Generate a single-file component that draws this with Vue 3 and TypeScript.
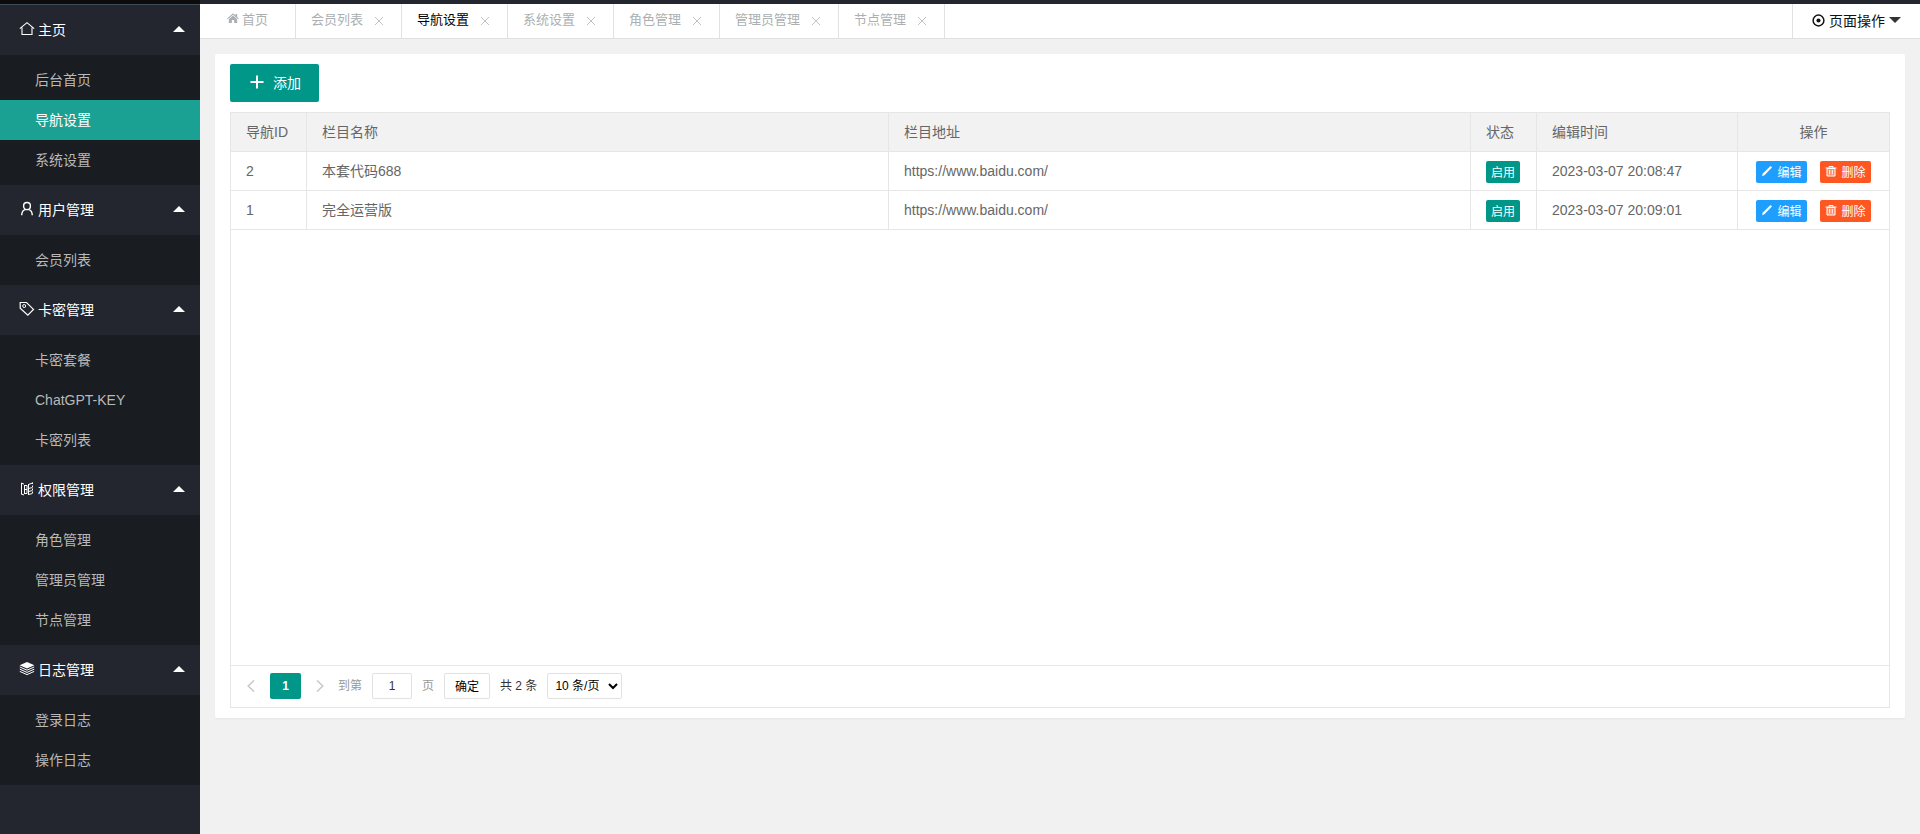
<script setup lang="ts">
import { ref } from 'vue'

interface MenuGroup {
  title: string
  icon: string
  children: string[]
}

interface NavRow {
  id: number
  name: string
  url: string
  time: string
}

const groups: MenuGroup[] = [
  { title: '主页', icon: 'home', children: ['后台首页', '导航设置', '系统设置'] },
  { title: '用户管理', icon: 'user', children: ['会员列表'] },
  { title: '卡密管理', icon: 'tag', children: ['卡密套餐', 'ChatGPT-KEY', '卡密列表'] },
  { title: '权限管理', icon: 'book', children: ['角色管理', '管理员管理', '节点管理'] },
  { title: '日志管理', icon: 'layers', children: ['登录日志', '操作日志'] },
]

const tabs = ref<string[]>(['会员列表', '导航设置', '系统设置', '角色管理', '管理员管理', '节点管理'])
const active = ref('导航设置')
const page = ref('1')

const rows: NavRow[] = [
  { id: 2, name: '本套代码688', url: 'https://www.baidu.com/', time: '2023-03-07 20:08:47' },
  { id: 1, name: '完全运营版', url: 'https://www.baidu.com/', time: '2023-03-07 20:09:01' },
]

function closeTab(name: string): void {
  tabs.value = tabs.value.filter((t) => t !== name)
}
</script>

<template>
  <div class="layout">
    <nav class="side">
      <section v-for="g in groups" :key="g.title" class="group">
        <button class="group-head" type="button">
          <svg class="group-icon" viewBox="0 0 16 16" fill="none" stroke="currentColor" aria-hidden="true">
            <path v-if="g.icon === 'home'" d="M.8 7.6 8 1.6l7.2 6M3 6.4v7.1h10V6.4" stroke-width="1.1" />
            <template v-else-if="g.icon === 'user'">
              <path d="M8 1.500c2 0 3.400 1.400 3.400 3.400S10 8.600 8 8.600 4.600 6.900 4.600 4.900 6 1.500 8 1.500zM2.700 14.200c.1-3 1.300-5 3.600-5.800M13.300 14.200c-.1-3-1.300-5-3.600-5.800" stroke-width="1.4" />
            </template>
            <template v-else-if="g.icon === 'tag'">
              <path d="M1.200 1.500h6.300l7 6.900-5.700 5.800-7.600-6.900z" stroke-width="1.2" />
              <circle cx="5.200" cy="5" r="1.500" />
            </template>
            <template v-else-if="g.icon === 'book'">
              <path d="M2.500 2v11.500M2.500 2l2.500 1.200M2.500 13l2.500 1M5.500 4v9M5.500 4.500H8v8H5.500M5.500 8.500H8" />
              <path d="M9.500 3v11M9.500 3.500l4-1.500M9.500 7.500l4-1M9.500 10.500l4-1M9.500 13.500l4-1" />
              <path d="M13.500 1.500v12" stroke-dasharray="1.500 1.500" />
            </template>
            <template v-else>
              <path d="M8 1 15.400 4.300 8 7.600 .6 4.300z" fill="currentColor" stroke="none" />
              <path d="M.8 6 8 9.200 15.200 6M.8 8.200 8 11.400l7.200-3.200M.8 10.400 8 13.600l7.200-3.200" />
            </template>
          </svg>
          <span>{{ g.title }}</span>
          <i class="caret up"></i>
        </button>
        <ul class="children">
          <li v-for="c in g.children" :key="c">
            <a href="#" :class="{ current: c === active }" @click.prevent="active = c">{{ c }}</a>
          </li>
        </ul>
      </section>
    </nav>

    <div class="main">
      <header class="tabbar">
        <button class="tab home" type="button">
          <svg class="home-icon" viewBox="0 0 14 12" fill="currentColor" aria-hidden="true">
            <path d="M7 .4 10 3V1.200h2v3.600l2 1.800-.8.900L7 2.200.8 7.500 0 6.600z" />
            <path d="M7 3.100 12 7.400V12H8.400V8.400H5.600V12H2V7.400z" />
          </svg>
          <span>首页</span>
        </button>
        <div v-for="t in tabs" :key="t" class="tab" :class="{ on: t === active }">
          <button class="tab-name" type="button" @click="active = t">{{ t }}</button>
          <button class="tab-close" type="button" :aria-label="'关闭' + t" @click="closeTab(t)">
            <svg viewBox="0 0 10 10" stroke="currentColor" fill="none"><path d="M1 1l8 8M9 1l-8 8" /></svg>
          </button>
        </div>
        <button class="page-ops" type="button">
          <svg viewBox="0 0 14 14" fill="none" stroke="currentColor" aria-hidden="true">
            <circle cx="7" cy="7" r="5.800" stroke-width="1.600" />
            <circle cx="7" cy="7" r="2.200" fill="currentColor" stroke="none" />
          </svg>
          <span>页面操作</span>
          <i class="caret down"></i>
        </button>
      </header>

      <main class="card">
        <button class="add" type="button">
          <svg viewBox="0 0 14 14" stroke="currentColor" stroke-width="2" aria-hidden="true"><path d="M7 .5v13M.5 7h13" /></svg>
          <span>添加</span>
        </button>

        <div class="table-box">
          <div class="table-body">
            <table>
              <colgroup>
                <col class="c-id" /><col /><col /><col class="c-state" /><col class="c-time" /><col class="c-ops" />
              </colgroup>
              <thead>
                <tr>
                  <th>导航ID</th>
                  <th>栏目名称</th>
                  <th>栏目地址</th>
                  <th>状态</th>
                  <th>编辑时间</th>
                  <th class="center">操作</th>
                </tr>
              </thead>
              <tbody>
                <tr v-for="r in rows" :key="r.id">
                  <td>{{ r.id }}</td>
                  <td>{{ r.name }}</td>
                  <td>{{ r.url }}</td>
                  <td><button class="mini state" type="button">启用</button></td>
                  <td>{{ r.time }}</td>
                  <td>
                    <div class="ops">
                      <button class="mini edit" type="button">
                        <svg viewBox="0 0 12 12" fill="currentColor" aria-hidden="true"><path d="M1 11.200l.8-2.600L9.300 1.300c.6-.5 1.900.8 1.400 1.400L3.400 10.200z" /></svg>
                        <span>编辑</span>
                      </button>
                      <button class="mini remove" type="button">
                        <svg viewBox="0 0 12 12" fill="none" stroke="currentColor" aria-hidden="true">
                          <path d="M.5 3h11M4 2.800V1.500h4v1.300" />
                          <path d="M2 3.500h8V11H2z" fill="currentColor" fill-opacity=".3" />
                          <path d="M4.700 5v4.500M7.300 5v4.500" />
                        </svg>
                        <span>删除</span>
                      </button>
                    </div>
                  </td>
                </tr>
              </tbody>
            </table>
          </div>
          <footer class="pager">
            <button class="arrow" type="button" aria-label="上一页">
              <svg viewBox="0 0 8 12" fill="none" stroke="currentColor" stroke-width="1.500"><path d="M7 .5 1.200 6 7 11.500" /></svg>
            </button>
            <button class="num" type="button">1</button>
            <button class="arrow" type="button" aria-label="下一页">
              <svg viewBox="0 0 8 12" fill="none" stroke="currentColor" stroke-width="1.500"><path d="M1 .5 6.800 6 1 11.500" /></svg>
            </button>
            <label class="skip">到第<input v-model="page" type="text" />页</label>
            <button class="sure" type="button">确定</button>
            <span class="total">共 2 条</span>
            <select aria-label="每页条数">
              <option>10 条/页</option>
              <option>20 条/页</option>
            </select>
          </footer>
        </div>
      </main>
    </div>
  </div>
</template>

<style>
body {
  background: #f1f1f1;
}
</style>

<style scoped>
.layout {
  display: flex;
  min-height: 100vh;
  font: 14px/24px "Liberation Sans", "Noto Sans CJK SC", sans-serif;
  color: #666;
}
button,
input,
select {
  font-family: inherit;
  margin: 0;
  padding: 0;
  border: 0;
  background: none;
  color: inherit;
  box-sizing: border-box;
}
button {
  cursor: pointer;
  white-space: nowrap;
}
svg {
  display: block;
  flex: none;
}

.side {
  flex: none;
  width: 200px;
  box-sizing: border-box;
  background: #24262f;
  border-top: 4px solid #0c0c0c;
  box-shadow: inset 0 1px #3f4b56;
  padding-top: 1px;
}
.group-head {
  display: flex;
  align-items: center;
  width: 100%;
  height: 50px;
  padding: 0 15px 2px 19px;
  gap: 3px;
  font-size: 14px;
  color: #fff;
}
.group-icon {
  width: 16px;
  height: 16px;
}
.caret {
  border: 6px solid transparent;
}
.caret.up {
  margin-left: auto;
  border-top-width: 0;
  border-bottom-color: #fff;
}
.caret.down {
  border-bottom-width: 0;
  border-top-color: #333;
}
.children {
  list-style: none;
  margin: 0;
  padding: 5px 0;
  background: #191c20;
  border-radius: 2px;
}
.children a {
  display: block;
  padding-left: 35px;
  line-height: 40px;
  color: #b8b9ba;
  text-decoration: none;
}
.children a.current {
  background: #1ba194;
  color: #fff;
}

.main {
  flex: 1;
  min-width: 0;
  border-top: 4px solid #23262e;
}
.tabbar {
  display: flex;
  height: 34px;
  background: #fff;
  border-bottom: 1px solid #e0e0e0;
}
.tab {
  display: flex;
  align-items: center;
  gap: 9px;
  padding: 0 15px;
  border-right: 1px solid #e2e2e2;
  font-size: 13px;
  color: #acafb1;
}
.tab.home {
  gap: 3px;
  padding: 0 27px 6px;
}
.tab.on {
  color: #000;
}
.home-icon {
  width: 12px;
  height: 10px;
}
.tab-name {
  padding-bottom: 6px;
  font-size: 13px;
}
.tab-close {
  display: flex;
  align-items: center;
  justify-content: center;
  width: 14px;
  height: 14px;
  color: #c2c2c2;
}
.tab-close svg {
  width: 10px;
  height: 10px;
}
.page-ops {
  display: flex;
  align-items: center;
  gap: 4px;
  margin-left: auto;
  padding: 0 19px 2px;
  border-left: 1px solid #e2e2e2;
  font-size: 14px;
  color: #111;
}
.page-ops svg {
  width: 13px;
  height: 13px;
}

.card {
  margin: 15px;
  padding: 10px 15px;
  background: #fff;
  border-radius: 2px;
  box-shadow: 0 1px 2px rgba(0, 0, 0, 0.05);
}
.add {
  display: flex;
  align-items: center;
  gap: 9px;
  height: 38px;
  padding: 0 18px 2px 20px;
  margin-bottom: 10px;
  border-radius: 2px;
  background: #009688;
  color: #fff;
  font-size: 14px;
}
.add svg {
  width: 14px;
  height: 14px;
}

.table-box {
  border: 1px solid #e6e6e6;
}
.table-body {
  min-height: 552px;
}
table {
  width: 100%;
  table-layout: fixed;
  border-collapse: separate;
  border-spacing: 0;
}
.c-id {
  width: 76px;
}
.c-state {
  width: 66px;
}
.c-time {
  width: 201px;
}
.c-ops {
  width: 151px;
}
th,
td {
  height: 38px;
  padding: 0 15px;
  border-right: 1px solid #e6e6e6;
  border-bottom: 1px solid #e6e6e6;
  font-weight: 400;
  text-align: left;
  white-space: nowrap;
}
th {
  background: #f2f2f2;
}
th:last-child,
td:last-child {
  border-right: 0;
}
th.center {
  text-align: center;
}
.mini {
  display: flex;
  align-items: center;
  justify-content: center;
  gap: 4px;
  height: 22px;
  margin-top: 2px;
  padding: 0 5px 2px;
  border-radius: 2px;
  color: #fff;
  font-size: 12px;
}
.mini svg {
  width: 12px;
  height: 12px;
}
.state {
  background: #009688;
}
.ops {
  display: flex;
  justify-content: center;
  gap: 13px;
}
.ops .mini {
  width: 51px;
}
.edit {
  background: #1e9fff;
}
.remove {
  background: #ff5722;
}

.pager {
  display: flex;
  align-items: center;
  height: 39px;
  padding: 0 7px 2px;
  border-top: 1px solid #e6e6e6;
  font-size: 12px;
  color: #333;
}
.arrow {
  display: flex;
  align-items: center;
  justify-content: center;
  width: 26px;
  height: 26px;
  color: #c8c8c8;
}
.arrow svg {
  width: 8px;
  height: 12px;
}
.num {
  width: 31px;
  height: 26px;
  margin: 0 6px;
  border-radius: 2px;
  background: #009688;
  color: #fff;
  font-size: 12px;
  font-weight: 700;
}
.skip {
  display: flex;
  align-items: center;
  gap: 10px;
  margin-left: 5px;
  color: #999;
}
.skip input {
  width: 40px;
  height: 26px;
  border: 1px solid #e2e2e2;
  border-radius: 2px;
  text-align: center;
  font-size: 12px;
  color: #333;
}
.sure {
  width: 46px;
  height: 26px;
  margin: 0 10px;
  border: 1px solid #e2e2e2;
  border-radius: 2px;
  font-size: 12px;
  color: #000;
}
select {
  width: 75px;
  height: 26px;
  margin-left: 10px;
  padding: 0 3px;
  border: 1px solid #e2e2e2;
  border-radius: 2px;
  background: #fff;
  font-size: 12px;
  color: #000;
}
</style>
